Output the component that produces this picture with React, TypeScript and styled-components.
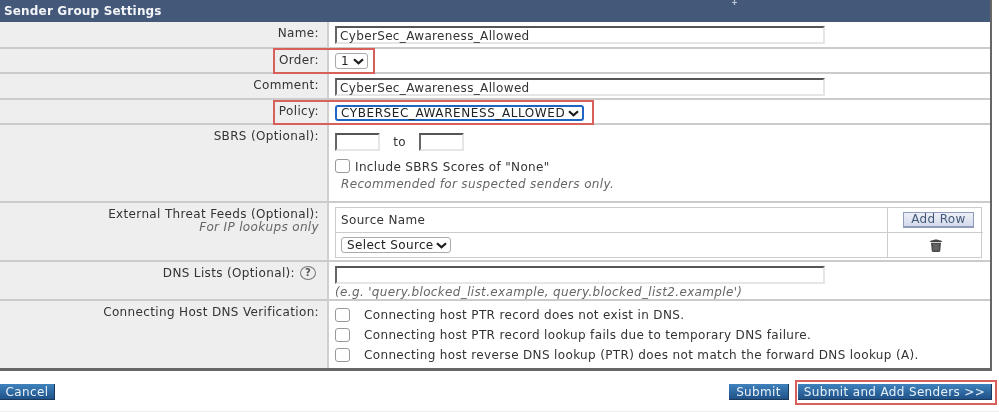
import React from 'react';
import styled, { createGlobalStyle } from 'styled-components';

const GlobalStyle = createGlobalStyle`
  html, body {
    margin: 0;
    padding: 0;
    background: #fff;
    overflow: hidden;
  }
  * {
    box-sizing: border-box;
  }
`;

const Page = styled.div`
  width: 999px;
  height: 412px;
  position: relative;
  font-family: 'DejaVu Sans', Verdana, sans-serif;
  font-size: 12px;
  letter-spacing: 0.35px;
  color: #333;
  border-bottom: 1px solid #eee;
  filter: blur(0.35px);
`;

const Panel = styled.section`
  width: 992px;
  border-right: 2px solid #666;
  border-bottom: 3px solid #666;
`;

const PanelTitle = styled.h2`
  margin: 0;
  height: 22px;
  padding: 4px 0 0 4px;
  background: #44597a;
  color: #f2f4f7;
  font-size: 12px;
  font-weight: 700;
  letter-spacing: 0.17px;
  line-height: 14px;
`;

const Row = styled.div<{ $h: number; $last?: boolean }>`
  display: grid;
  grid-template-columns: 329px 1fr;
  height: ${({ $h }) => $h}px;
  border-bottom: ${({ $last }) => ($last ? 'none' : '2px solid #cbcbcb')};
`;

const Label = styled.div`
  background: #eeeeee;
  border-right: 2px solid #cfcfcf;
  padding: 4px 8px 0 0;
  text-align: right;
  line-height: 14px;
  color: #333;
`;

const LabelNote = styled.div`
  font-style: italic;
  color: #666;
  line-height: 12px;
`;

const HelpIcon = styled.span`
  display: inline-flex;
  align-items: center;
  justify-content: center;
  width: 16px;
  height: 14px;
  margin-left: 5px;
  margin-right: 3px;
  border: 1px solid #777;
  border-radius: 50%;
  font-size: 10px;
  font-weight: 700;
  line-height: 1;
  color: #555;
  vertical-align: 1px;
`;

const Cell = styled.div<{ $top?: number }>`
  padding: ${({ $top }) => $top ?? 4}px 8px 0 6px;
  background: #fff;
`;

const TextBox = styled.div<{ $w?: number; $h?: number }>`
  width: ${({ $w }) => $w ?? 490}px;
  height: ${({ $h }) => $h ?? 18}px;
  border-top: 2px solid #555;
  border-left: 2px solid #666;
  border-right: 2px solid #e6e6e6;
  border-bottom: 2px solid #e6e6e6;
  padding: 1px 0 0 3px;
  line-height: 14px;
  color: #333;
  background: #fff;
  white-space: nowrap;
`;

const Select = styled.div<{ $focus?: boolean; $w: number }>`
  display: inline-flex;
  align-items: center;
  justify-content: space-between;
  width: ${({ $w }) => $w}px;
  height: 16px;
  padding: 0 3px 0 ${({ $focus }) => ($focus ? 4 : 5)}px;
  border: ${({ $focus }) => ($focus ? '2px solid #1f66c4' : '1px solid #aaa')};
  border-radius: 3px;
  background: #fff;
  color: #222;
  letter-spacing: ${({ $focus }) => ($focus ? 0.58 : 0.35)}px;
  line-height: 14px;
  white-space: nowrap;
`;

const Chevron = () => (
  <svg width="11" height="7" viewBox="0 0 11 7" fill="none">
    <path d="M1 1.2 L5.5 5.2 L10 1.2" stroke="#1a1a1a" strokeWidth="2.2" />
  </svg>
);

const InlineRow = styled.div`
  display: flex;
  align-items: center;
`;

const ToText = styled.span`
  width: 39px;
  text-align: center;
`;

const CheckRow = styled.label<{ $gap: number; $h: number; $top?: number }>`
  display: flex;
  align-items: center;
  gap: ${({ $gap }) => $gap}px;
  height: ${({ $h }) => $h}px;
  margin-top: ${({ $top }) => $top ?? 0}px;
  color: #333;
  white-space: nowrap;
`;

const Check = styled.span<{ $lift?: number }>`
  flex: none;
  width: 15px;
  height: 14px;
  margin-top: ${({ $lift }) => -($lift ?? 0)}px;
  border: 1px solid #999;
  border-radius: 3px;
  background: #fff;
`;

const Hint = styled.div<{ $left?: number; $top?: number }>`
  margin-left: ${({ $left }) => $left ?? 0}px;
  margin-top: ${({ $top }) => $top ?? 0}px;
  font-style: italic;
  color: #666;
  line-height: 14px;
  white-space: nowrap;
`;

const Feeds = styled.div`
  display: grid;
  grid-template-columns: 552px 95px;
  grid-template-rows: 25px 24px;
  width: 647px;
  border: 1px solid #ccc;
`;

const FeedCell = styled.div<{ $center?: boolean; $right?: boolean; $bottom?: boolean }>`
  display: flex;
  align-items: center;
  justify-content: ${({ $center }) => ($center ? 'center' : 'flex-start')};
  padding-left: ${({ $center }) => ($center ? 0 : 5)}px;
  border-right: ${({ $right }) => ($right ? '1px solid #ccc' : 'none')};
  border-bottom: ${({ $bottom }) => ($bottom ? '1px solid #ccc' : 'none')};
`;

const AddRow = styled.button`
  width: 71px;
  height: 16px;
  margin-left: 6px;
  padding: 0;
  border: 1px solid #8e9bbb;
  border-bottom-width: 2px;
  background: linear-gradient(#eceff7, #d5dbec);
  color: #44597a;
  font: 12px 'DejaVu Sans', Verdana, sans-serif;
  letter-spacing: 0.35px;
  line-height: 13px;
`;

const Footer = styled.div`
  display: flex;
  align-items: flex-start;
  justify-content: space-between;
  padding: 13px 7px 0 0;
`;

const FooterRight = styled.div`
  display: flex;
  gap: 9px;
`;

const BlueButton = styled.button<{ $w: number }>`
  width: ${({ $w }) => $w}px;
  height: 16px;
  padding: 0;
  border: none;
  border-right: 1px solid #1c3a5c;
  border-bottom: 1px solid #1c3a5c;
  background: linear-gradient(#3f82bd, #1f5288);
  color: #e9f1f8;
  font: 12px 'DejaVu Sans', Verdana, sans-serif;
  line-height: 14px;
  letter-spacing: 0.35px;
  white-space: nowrap;
`;

const Callout = styled.div<{ $x: number; $y: number; $w: number; $h: number }>`
  position: absolute;
  left: ${({ $x }) => $x}px;
  top: ${({ $y }) => $y}px;
  width: ${({ $w }) => $w}px;
  height: ${({ $h }) => $h}px;
  border: 2px solid #d8605a;
  pointer-events: none;
`;

const CrossMark = styled.svg`
  position: absolute;
  left: 731px;
  top: 0;
`;

const TrashIcon = () => (
  <svg width="14" height="13" viewBox="0 0 14 13">
    <path d="M1 3 C1 1.6 3 1.2 5 1 C5 0.4 9 0.4 9 1 C11 1.2 13 1.6 13 3 Z" fill="#444" />
    <path d="M2 3.8 H12 L11.2 12 Q11 13 10 13 H4 Q3 13 2.8 12 Z" fill="#4a4a4a" />
    <path d="M5 5 V11.5 M7 5 V11.5 M9 5 V11.5" stroke="#8a8a8a" strokeWidth="0.8" />
  </svg>
);

export default function App() {
  return (
    <>
      <GlobalStyle />
      <Page>
        <Panel>
          <PanelTitle>Sender Group Settings</PanelTitle>
          <Row $h={27}>
            <Label>Name:</Label>
            <Cell>
              <TextBox>CyberSec_Awareness_Allowed</TextBox>
            </Cell>
          </Row>
          <Row $h={25}>
            <Label>Order:</Label>
            <Cell>
              <Select $w={33}>
                1 <Chevron />
              </Select>
            </Cell>
          </Row>
          <Row $h={26}>
            <Label>Comment:</Label>
            <Cell>
              <TextBox>CyberSec_Awareness_Allowed</TextBox>
            </Cell>
          </Row>
          <Row $h={25}>
            <Label>Policy:</Label>
            <Cell $top={5}>
              <Select $focus $w={249}>
                CYBERSEC_AWARENESS_ALLOWED <Chevron />
              </Select>
            </Cell>
          </Row>
          <Row $h={78}>
            <Label>SBRS (Optional):</Label>
            <Cell $top={8}>
              <InlineRow>
                <TextBox $w={45} />
                <ToText>to</ToText>
                <TextBox $w={45} />
              </InlineRow>
              <CheckRow $gap={5} $h={16} $top={8}>
                <Check $lift={3} />
                Include SBRS Scores of "None"
              </CheckRow>
              <Hint $left={6} $top={2}>
                Recommended for suspected senders only.
              </Hint>
            </Cell>
          </Row>
          <Row $h={59}>
            <Label>
              External Threat Feeds (Optional):
              <LabelNote>For IP lookups only</LabelNote>
            </Label>
            <Cell>
              <Feeds>
                <FeedCell $right $bottom>Source Name</FeedCell>
                <FeedCell $center $bottom>
                  <AddRow>Add Row</AddRow>
                </FeedCell>
                <FeedCell $right>
                  <Select $w={110}>
                    Select Source <Chevron />
                  </Select>
                </FeedCell>
                <FeedCell $center>
                  <TrashIcon />
                </FeedCell>
              </Feeds>
            </Cell>
          </Row>
          <Row $h={39}>
            <Label>
              DNS Lists (Optional):
              <HelpIcon>?</HelpIcon>
            </Label>
            <Cell>
              <TextBox />
              <Hint $top={1}>(e.g. 'query.blocked_list.example, query.blocked_list2.example')</Hint>
            </Cell>
          </Row>
          <Row $h={67} $last>
            <Label>Connecting Host DNS Verification:</Label>
            <Cell $top={4}>
              <CheckRow $gap={14} $h={20}>
                <Check />
                Connecting host PTR record does not exist in DNS.
              </CheckRow>
              <CheckRow $gap={14} $h={20}>
                <Check />
                Connecting host PTR record lookup fails due to temporary DNS failure.
              </CheckRow>
              <CheckRow $gap={14} $h={20}>
                <Check />
                Connecting host reverse DNS lookup (PTR) does not match the forward DNS lookup (A).
              </CheckRow>
            </Cell>
          </Row>
        </Panel>
        <Footer>
          <BlueButton $w={55}>Cancel</BlueButton>
          <FooterRight>
            <BlueButton $w={60}>Submit</BlueButton>
            <BlueButton $w={194}>Submit and Add Senders &gt;&gt;</BlueButton>
          </FooterRight>
        </Footer>
        <Callout $x={273} $y={48} $w={102} $h={26} />
        <Callout $x={273} $y={100} $w={321} $h={25} />
        <Callout $x={795} $y={380} $w={202} $h={25} />
        <CrossMark width="7" height="6" viewBox="0 0 7 6">
          <path d="M3.5 0 V5 M1 2.5 H6" stroke="#b8c2d0" strokeWidth="1.2" />
        </CrossMark>
      </Page>
    </>
  );
}
